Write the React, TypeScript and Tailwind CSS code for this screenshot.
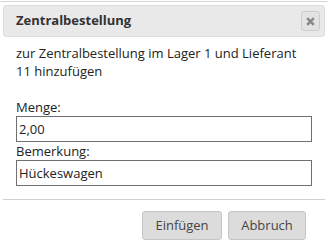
import { useState } from 'react'

export default function App() {
  const [menge, setMenge] = useState('2,00')
  const [bemerkung, setBemerkung] = useState('Hückeswagen')

  return (
    <div className="w-[328px] h-[248px] bg-white text-[13px] text-[#222] font-['Open_Sans',sans-serif] overflow-hidden">
      <div className="mt-px h-px bg-[#d6d6d6]" />

      {/* Title bar */}
      <div className="mx-[3px] mt-[3px] h-[32px] flex items-center justify-between pl-[12px] pr-[4px] bg-[#e9e9e9] border border-[#dddddd] rounded-[3px]">
        <span className="font-bold text-[#333]">Zentralbestellung</span>
        <button className="w-[19px] h-[20px] flex items-center justify-center bg-[#e3e3e3] border border-[#cccccc] rounded-[3px]">
          <svg width="9" height="9" viewBox="0 0 9 9">
            <path d="M1.2 1.2 L7.8 7.8 M7.8 1.2 L1.2 7.8" stroke="#888" strokeWidth="2.6" strokeLinecap="butt" />
          </svg>
        </button>
      </div>

      {/* Content */}
      <div className="px-[16px] pt-[7px] leading-[18px]">
        <p>zur Zentralbestellung im Lager 1 und Lieferant 11 hinzufügen</p>

        <label className="block mt-[18px]">Menge:</label>
        <input
          value={menge}
          onChange={e => setMenge(e.target.value)}
          className="block w-[296px] h-[26px] px-[2px] border border-[#6f6f6f] text-[13px] text-[#222] outline-none"
        />

        <label className="block">Bemerkung:</label>
        <input
          value={bemerkung}
          onChange={e => setBemerkung(e.target.value)}
          className="block w-[296px] h-[26px] px-[2px] border border-[#6f6f6f] text-[13px] text-[#222] outline-none"
        />
      </div>

      {/* Button pane */}
      <div className="mx-[3px] mt-[13px] border-t border-[#cfcfcf] pt-[11px] flex justify-end gap-[6px] pr-[19px]">
        <button className="h-[29px] w-[80px] bg-[#dcdcdc] border border-[#c5c5c5] rounded-[3px] text-[#454545]">
          Einfügen
        </button>
        <button className="h-[29px] w-[78px] bg-[#dcdcdc] border border-[#c5c5c5] rounded-[3px] text-[#454545]">
          Abbruch
        </button>
      </div>
    </div>
  )
}
